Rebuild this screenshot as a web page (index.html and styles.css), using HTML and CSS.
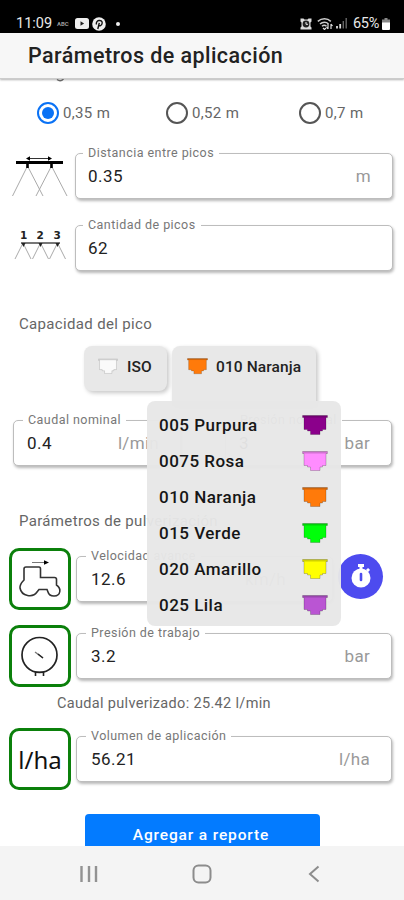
FILE: index.html
```html
<!DOCTYPE html>
<html lang="es">
<head>
<meta charset="utf-8">
<title>Parámetros de aplicación</title>
<link rel="stylesheet" href="styles.css">
</head>
<body>
<svg width="0" height="0" class="defs">
  <symbol id="nozzle" viewBox="0 0 26 21"><path d="M.5.5h25v2h-1.500v12h-3.500v1.500h-2.500v3.500h-9.500v-3.500h-3v-1.500H2v-12H.5z" stroke-opacity=".2" stroke="#000"/><path d="M1 1.500h24" stroke="#000" stroke-opacity=".18" stroke-width="2" fill="none"/></symbol>
</svg>
<div class="phone">
  <div class="status">
    <span class="clock">11:09</span>
    <span class="abc">ABC</span>
    <svg class="yt" width="14" height="11" viewBox="0 0 14 11"><rect width="14" height="11" rx="2.500" fill="#eee"/><path d="M5.500 3.300v4.400l3.600-2.200z" fill="#222"/></svg>
    <svg class="pin" width="14" height="14" viewBox="0 0 14 14"><circle cx="7" cy="7" r="6.800" fill="#eee"/><path d="M5.800 12 7.300 5.800M4.500 7.500C3 3 10.500 2 10.200 6c-.3 3-3 3.200-3.500 2" fill="none" stroke="#111" stroke-width="1.400"/></svg>
    <i class="dot"></i>
    <span class="spacer"></span>
    <svg class="alarm" width="12" height="12" viewBox="0 0 12 12"><path d="M.5.500h3l1 1h3l1-1h3v3l-1 1v4l1 1v2h-11v-2l1-1v-4l-1-1z" fill="#ddd"/><circle cx="6" cy="6" r="3.400" fill="#222"/><path d="M6 4v2.300h2" stroke="#eee" fill="none"/></svg>
    <svg class="wifi" width="16" height="12" viewBox="0 0 16 12"><path d="M.8 3.400c4-3.500 9.500-3.500 13 0M3 6c2.500-2.300 6.300-2.300 8.500 0M5 8.300c1.500-1.300 3-1.300 4.500 0" fill="none" stroke="#ccc" stroke-width="1.500"/><path d="m6 10 1.500 1.500L9 10M11 6v5m0 0-1.500-2M14 11V6m0 0 1.500 2" fill="none" stroke="#ddd" stroke-width="1.200"/></svg>
    <svg class="signal" width="11" height="11" viewBox="0 0 11 11"><path d="M1 8v2.500M4.200 6v4.500" stroke="#ddd" stroke-width="1.800"/><path d="M7.300 3v7.500M10.200 0v10.500" stroke="#666" stroke-width="1.400"/></svg>
    <span class="pct">65%</span>
    <svg class="battery" width="8" height="12" viewBox="0 0 8 12"><path d="M2.500 0h3v1.500H8V5H0V1.500h2.500z" fill="#888"/><path d="M0 4.500h8V11a1 1 0 0 1-1 1H1a1 1 0 0 1-1-1z" fill="#fff"/></svg>
  </div>
  <header class="header"><h1>Parámetros de aplicación</h1></header>

  <main class="content">
    <div class="cut"><svg width="9" height="3" viewBox="0 0 9 3"><path d="M1 .5q3.500 2.600 6.500-.5" fill="none" stroke="#666" stroke-width="1.400"/></svg></div>
    <div class="radios">
      <label class="radio on"><i></i><span>0,35 m</span></label>
      <label class="radio"><i></i><span>0,52 m</span></label>
      <label class="radio"><i></i><span>0,7 m</span></label>
    </div>

    <div class="row spacing">
      <svg class="pic" width="57" height="45" viewBox="0 0 57 45"><g fill="none"><path d="M16.500 12 1.500 42M16.500 12 32 42M40.500 12 25 42M40.500 12 56 42" stroke="#aaa"/><path d="M17 4.500h22" stroke="#333"/><path d="M5 8.500h47" stroke="#000" stroke-width="3"/><path d="M16.500 9v5M40.500 9v5" stroke="#000" stroke-width="2.600"/></g><path d="m15 4.500 4-2.300v4.600zM41 4.500l-4-2.300v4.600z"/></svg>
      <div class="field"><span class="label">Distancia entre picos</span><b>0.35</b><em>m</em></div>
    </div>
    <div class="row count">
      <svg class="pic" width="57" height="34" viewBox="0 0 57 34"><g class="nums"><text x="8" y="10">1</text><text x="24.500" y="10">2</text><text x="41.500" y="10">3</text></g><path d="M11 14 3 30M11 14l8 16M28.500 14l-8 16M28.500 14l8 16M45.500 14l-8 16M45.500 14l8 16" fill="none" stroke="#aaa"/><path d="M9 14h39" stroke="#777" stroke-width="2"/><path d="M9.500 14h4l-2 4zM26.500 14h4l-2 4zM43.500 14h4l-2 4z" fill="#222"/></svg>
      <div class="field"><span class="label">Cantidad de picos</span><b>62</b></div>
    </div>

    <h2 class="title nozzles">Capacidad del pico</h2>
    <div class="chips">
      <div class="chip iso"><svg width="20" height="17" viewBox="0 0 26 21" class="white"><use href="#nozzle"/></svg><span>ISO</span></div>
      <div class="chip color"><svg width="21" height="17" viewBox="0 0 26 21" class="naranja"><use href="#nozzle"/></svg><span>010 Naranja</span>
        <div class="menu">
          <div class="item"><span>005 Purpura</span><svg class="purpura"><use href="#nozzle"/></svg></div>
          <div class="item"><span>0075 Rosa</span><svg class="rosa"><use href="#nozzle"/></svg></div>
          <div class="item"><span>010 Naranja</span><svg class="naranja"><use href="#nozzle"/></svg></div>
          <div class="item"><span>015 Verde</span><svg class="verde"><use href="#nozzle"/></svg></div>
          <div class="item"><span>020 Amarillo</span><svg class="amarillo"><use href="#nozzle"/></svg></div>
          <div class="item"><span>025 Lila</span><svg class="lila"><use href="#nozzle"/></svg></div>
        </div>
      </div>
    </div>
    <div class="pair">
      <div class="field"><span class="label">Caudal nominal</span><b>0.4</b><em>l/min</em></div>
      <div class="field"><span class="label">Presión nominal</span><b>3</b><em>bar</em></div>
    </div>

    <h2 class="title spray">Parámetros de pulverización</h2>
    <div class="row work speed">
      <div class="tile"><svg width="56" height="56" viewBox="0 0 56 56"><path d="M20 11.500h13" stroke="#777"/><path d="m37 11.500-5-2.200v4.400z"/><path d="M12 29V18q0-2 2-2h13q1.500 0 1.500 2v8.500h14q2 0 2 2V34q4 3 3.300 6.500c-.8 6-10.300 6-11.800.5l-1-2.500h-8l-2 2.500c-4 6-15.500 4.500-17-4-.4-3.500 2-6 4-8z" fill="none" stroke="#333" stroke-width="1.600"/></svg></div>
      <div class="field"><span class="label">Velocidad avance</span><b>12.6</b><em>km/h</em></div>
      <div class="timer"><svg width="22" height="26" viewBox="0 0 22 26"><path d="M8 1h6v3H8z" fill="#fff"/><path d="M11 3v4M17 6l2 2" stroke="#fff" stroke-width="3"/><circle cx="11" cy="15" r="9.500" fill="#fff"/><path d="M11 11v6" stroke="#4d4bef" stroke-width="2.600" stroke-linecap="round"/></svg></div>
    </div>
    <div class="row work pressure">
      <div class="tile"><svg width="56" height="56" viewBox="0 0 56 56"><g fill="none" stroke="#222"><circle cx="27.500" cy="27" r="17.500" stroke-width="1.700"/><path d="m23 24 8 6" stroke="#777" stroke-width="1.300"/><path d="m26 26 5 4" stroke-width="1.200"/><path d="M23.500 44v4M31.500 44v4M23 44.300h9" stroke-width="1.600"/></g></svg></div>
      <div class="field"><span class="label">Presión de trabajo</span><b>3.2</b><em>bar</em></div>
    </div>
    <p class="note">Caudal pulverizado: 25.42 l/min</p>
    <div class="row work volume">
      <div class="tile"><span>l/ha</span></div>
      <div class="field"><span class="label">Volumen de aplicación</span><b>56.21</b><em>l/ha</em></div>
    </div>
    <button class="report">Agregar a reporte</button>
  </main>

  <nav class="nav">
    <svg width="18" height="18" viewBox="0 0 18 18"><path d="M1.500 1v16M9 1v16M16 1v16" stroke="#929292" stroke-width="2.400"/></svg>
    <svg class="home" width="20" height="20" viewBox="0 0 20 20"><rect x="1.500" y="1.500" width="17" height="17" rx="5" fill="none" stroke="#8c8c8c" stroke-width="2"/></svg>
    <svg width="12" height="18" viewBox="0 0 12 18"><path d="M10.500 1.500 2 9l8.500 7.500" fill="none" stroke="#8c8c8c" stroke-width="2"/></svg>
  </nav>
</div>
</body>
</html>
```
FILE: styles.css
```css
* { box-sizing: border-box; }
body { margin: 0; font-family: Roboto, "Liberation Sans", sans-serif; background: #fff; color: #222; }
.defs { position: absolute; }
svg { display: block; flex: none; }
.phone { width: 404px; height: 900px; display: flex; flex-direction: column; overflow: hidden; }

.status { height: 33px; flex: none; background: #000; color: #e8e8e8; display: flex; align-items: center; padding: 14px 14px 0 16px; }
.clock { font-size: 14.5px; width: 41px; letter-spacing: 0; }
.abc { font-size: 6px; font-weight: 700; color: #999; width: 18px; }
.pin { margin-left: 3px; }
.dot { width: 4px; height: 4px; border-radius: 50%; background: #eee; margin-left: 10px; }
.spacer { flex: 1; }
.wifi { margin-left: 5px; }
.signal { margin-left: 3px; }
.pct { font-size: 14.5px; width: 28px; margin-left: 6px; letter-spacing: -.3px; }
.battery { margin-left: 1px; }

.header { height: 46px; flex: none; background: #f7f7f7; border-bottom: 1px solid #ccc; box-shadow: 0 1px 2px rgba(0,0,0,.3); padding-left: 28px; display: flex; align-items: center; position: relative; z-index: 3; }
.header h1 { margin: 0; font-size: 21.5px; font-weight: 500; letter-spacing: .44px; white-space: nowrap; }

.content { flex: 1; min-height: 0; overflow: hidden; display: flex; flex-direction: column; }
.cut { flex: none; height: 3px; padding-left: 56px; position: relative; z-index: 4; }
.radios { flex: none; height: 24px; margin-top: 19px; padding-left: 37px; display: grid; grid-template-columns: 129px 133px 100px; }
.radio { display: flex; align-items: center; font-size: 15px; color: #666; gap: 4px; letter-spacing: .35px; }
.radio i { width: 22px; height: 22px; border-radius: 50%; border: 2px solid #555; display: grid; place-items: center; }
.radio.on i { border-color: #0a72f5; }
.radio.on i::after { content: ""; width: 12px; height: 12px; border-radius: 50%; background: #0a72f5; }

.row { flex: none; display: flex; align-items: center; }
.spacing { height: 46px; margin-top: 28px; padding: 0 11px 0 11px; }
.count { height: 46px; margin-top: 26px; padding: 0 11px 0 12px; }
.spacing .field { margin-left: 7px; }
.count .field { margin-left: 6px; }
.count .pic { margin-top: -4px; }
.nums { font: 700 10.500px "DejaVu Sans", sans-serif; fill: #222; }

.field { flex: 1; min-width: 0; height: 46px; border: 1px solid #bdbdbd; border-radius: 5px; background: #fff; box-shadow: 1px 2px 3px rgba(0,0,0,.28); position: relative; display: flex; align-items: center; justify-content: space-between; padding: 0 21px 0 12px; }
.field b { font-weight: 400; font-size: 17px; letter-spacing: .45px; color: #222; }
.field em { font-style: normal; font-size: 17px; letter-spacing: .3px; color: #999; }
.label { position: absolute; left: 7px; top: -9px; height: 16px; line-height: 16px; padding: 0 5px; background: #fff; font-size: 12.5px; letter-spacing: .45px; color: #777; white-space: nowrap; }

.title { flex: none; margin: 0 0 0 19px; font-size: 15px; font-weight: 400; letter-spacing: .34px; line-height: 20px; color: #666; }
.nozzles { margin-top: 43px; }
.chips { flex: none; display: flex; margin-top: 12px; padding-left: 84px; gap: 5px; height: 45px; }
.chip { height: 45px; display: flex; align-items: center; background: #e8e8e8; border-radius: 8px; font-size: 15.5px; letter-spacing: .1px; font-weight: 500; padding-bottom: 4px; box-shadow: 2px 2px 4px rgba(0,0,0,.22); }
.chip.iso { width: 83px; padding-left: 14px; gap: 9px; }
.chip.color { width: 144px; height: 60px; padding: 0 0 19px 15px; gap: 8px; position: relative; z-index: 2; border-radius: 8px 8px 0 0; white-space: nowrap; }
.menu { position: absolute; left: -25px; top: 55px; width: 194px; height: 225px; padding: 6px 13px 0 12px; border-radius: 8px; background: rgba(231,231,231,.96); }
.item { height: 36px; display: flex; align-items: center; justify-content: space-between; font-size: 17px; letter-spacing: .48px; color: #161616; }
.item svg { width: 26px; height: 21px; }
.white { fill: #fff; opacity: .8; }
.purpura { fill: #8b008b; }
.rosa { fill: #ff8cff; }
.naranja { fill: #ff7a0a; }
.verde { fill: #00ff0a; }
.amarillo { fill: #ffff00; }
.lila { fill: #ba55d3; }

.pair { flex: none; margin-top: 29px; padding: 0 12px 0 13px; display: grid; grid-template-columns: 168px 167px; justify-content: space-between; height: 46px; }
.pair .field { padding-left: 13px; }
.pair .label { left: 9px; }
.spray { margin-top: 45px; }
.work { height: 62px; padding: 0 12px 0 9px; gap: 5px; }
.work .field { padding-left: 14px; }
.work .label { left: 9px; }
.speed { margin-top: 17px; padding-right: 21px; }
.speed .field { padding-right: 46px; }
.pressure { margin-top: 15px; }
.tile { flex: none; width: 62px; height: 62px; border: 3px solid #0b800b; border-radius: 10px; display: grid; place-items: center; background: #fff; }
.tile span { font-size: 24px; font-family: "Noto Sans", sans-serif; color: #111; }
.timer { flex: none; width: 45px; height: 45px; margin-top: -6px; border-radius: 50%; background: #4d4bef; display: grid; place-items: center; }
.note { flex: none; margin: 7px 0 0 57px; height: 20px; line-height: 20px; font-size: 14.5px; letter-spacing: .33px; color: #666; }
.volume { margin-top: 14px; }
.report { flex: none; width: 235px; height: 42px; margin: 24px 0 0 85px; padding: 0 3px 0 0; border: 0; border-radius: 4px; background: #037bff; color: #fff; font: 500 15.5px Roboto, sans-serif; letter-spacing: .85px; }

.nav { flex: none; height: 54px; background: #f4f4f4; display: flex; align-items: center; padding: 2px 84px 0 80px; justify-content: space-between; }
.home { margin-right: 3px; }
```
